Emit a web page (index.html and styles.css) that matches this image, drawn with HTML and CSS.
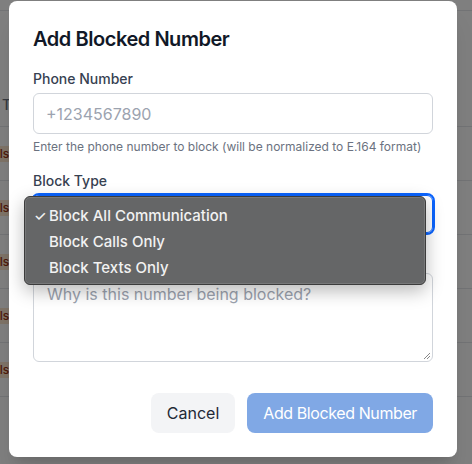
FILE: index.html
```html
<!DOCTYPE html>
<html lang="en">
<head>
<meta charset="utf-8">
<title>Add Blocked Number</title>
<link rel="stylesheet" href="styles.css">
</head>
<body>
<div class="page">
  <div class="card">
    <div class="thead"><span class="th">Type</span></div>
    <div class="row"><span class="badge">Calls</span></div>
    <div class="row"><span class="badge">Calls</span></div>
    <div class="row"><span class="badge">Calls</span></div>
    <div class="row"><span class="badge">Calls</span></div>
    <div class="row"><span class="badge">Calls</span></div>
  </div>
</div>
<div class="overlay"></div>
<div class="modal">
  <h2 class="title">Add Blocked Number</h2>
  <label class="label">Phone Number</label>
  <div class="input"><span class="placeholder">+1234567890</span></div>
  <p class="help">Enter the phone number to block (will be normalized to E.164 format)</p>
  <label class="label mt16">Block Type</label>
  <div class="select">
    <span class="select-value">Block All Communication</span>
    <svg class="chevron" width="10" height="10" viewBox="0 0 10 10"><path d="M2 3.5 L5 6.5 L8 3.5" fill="none" stroke="#222" stroke-width="1.5" stroke-linecap="round" stroke-linejoin="round"/></svg>
  </div>
  <label class="label mt16">Reason (optional)</label>
  <div class="textarea"><span class="placeholder">Why is this number being blocked?</span>
    <svg class="grip" width="9" height="9" viewBox="0 0 9 9"><path d="M8 2 L2 8 M8 5 L5 8" stroke="#888" stroke-width="1"/></svg>
  </div>
  <div class="actions">
    <button class="btn btn-cancel">Cancel</button>
    <button class="btn btn-primary">Add Blocked Number</button>
  </div>
  <div class="popup">
    <div class="opt"><span class="check">✓</span>Block All Communication</div>
    <div class="opt">Block Calls Only</div>
    <div class="opt">Block Texts Only</div>
  </div>
</div>
</body>
</html>
```
FILE: styles.css
```css
* { box-sizing: border-box; }
html, body { margin: 0; padding: 0; }
body {
  width: 472px;
  height: 464px;
  overflow: hidden;
  background: #ffffff;
  font-family: Inter, "Noto Sans", sans-serif;
  position: relative;
}
.page { padding-top: 10px; }
.card { border-top: 1px solid #e5e7eb; }
.thead {
  height: 116px;
  border-bottom: 1px solid #e5e7eb;
  display: flex;
  align-items: flex-end;
  padding-bottom: 14px;
}
.th {
  margin-left: 2px;
  font-size: 14px;
  color: #6b7280;
  font-weight: 500;
  line-height: 14px;
}
.row {
  height: 54px;
  border-bottom: 1px solid #e5e7eb;
  display: flex;
  align-items: center;
}
.badge {
  margin-left: -27px;
  background: #fde6cf;
  color: #9a3412;
  font-size: 12px;
  line-height: 16px;
  padding: 0 8px;
  font-weight: 500;
}
.overlay {
  position: absolute;
  inset: 0;
  background: rgba(0, 0, 0, 0.5);
}
.modal {
  position: absolute;
  left: 9px;
  top: 1px;
  width: 448px;
  height: 456px;
  background: #ffffff;
  border-radius: 8px;
  padding: 24px;
  box-shadow: 0 20px 25px -5px rgba(0,0,0,0.1), 0 8px 10px -6px rgba(0,0,0,0.1);
}
.title {
  margin: 0 0 16px 0;
  font-size: 20px;
  line-height: 28px;
  font-weight: 600;
  letter-spacing: -0.45px;
  color: #111827;
}
.label {
  display: block;
  font-size: 14px;
  line-height: 20px;
  font-weight: 500;
  color: #374151;
}
.mt16 { margin-top: 16px; }
.input {
  margin-top: 4px;
  height: 41px;
  border: 1px solid #d1d5db;
  border-radius: 6px;
  padding: 0 12px;
  display: flex;
  align-items: center;
}
.placeholder {
  font-size: 16px;
  color: #9ca3af;
}
.help {
  margin: 5px 0 0 0;
  font-size: 12px;
  line-height: 16px;
  color: #6b7280;
}
.select {
  margin-top: 4px;
  height: 38px;
  border: 1px solid #0a64ff;
  outline: 2px solid #0a64ff;
  border-radius: 6px;
  padding: 0 12px;
  display: flex;
  align-items: center;
  justify-content: space-between;
  font-size: 16px;
  color: #111827;
}
.chevron { margin-right: -6px; margin-top: -2px; }
.textarea {
  margin-top: 4px;
  height: 89px;
  border: 1px solid #d1d5db;
  border-radius: 6px;
  padding: 8px 13px;
  position: relative;
  line-height: 24px;
}
.grip { position: absolute; right: 1px; bottom: 1px; }
.actions {
  margin-top: 31px;
  display: flex;
  justify-content: flex-end;
  gap: 12px;
}
.btn {
  height: 40px;
  border: none;
  border-radius: 8px;
  padding: 0 16px;
  font-family: Inter, "Noto Sans", sans-serif;
  font-size: 16px;
}
.btn-cancel {
  background: #f3f4f6;
  color: #1f2937;
}
.btn-primary {
  background: #80a8e5;
  color: #ffffff;
  letter-spacing: -0.4px;
}
.popup {
  position: absolute;
  left: 15px;
  top: 195px;
  width: 402px;
  height: 89px;
  background: #656667;
  border: 1px solid #3c3c3c;
  border-radius: 6px;
  padding: 6px 0 4px;
  box-shadow: 0 6px 18px rgba(0,0,0,0.28), inset 0 0 0 1px rgba(255,255,255,0.12);
}
.opt {
  position: relative;
  height: 26px;
  line-height: 26px;
  padding-left: 24px;
  font-size: 15px;
  color: #f2f2f2;
  font-weight: 500;
}
.check {
  position: absolute;
  left: 9px;
  font-size: 14px;
}
```
